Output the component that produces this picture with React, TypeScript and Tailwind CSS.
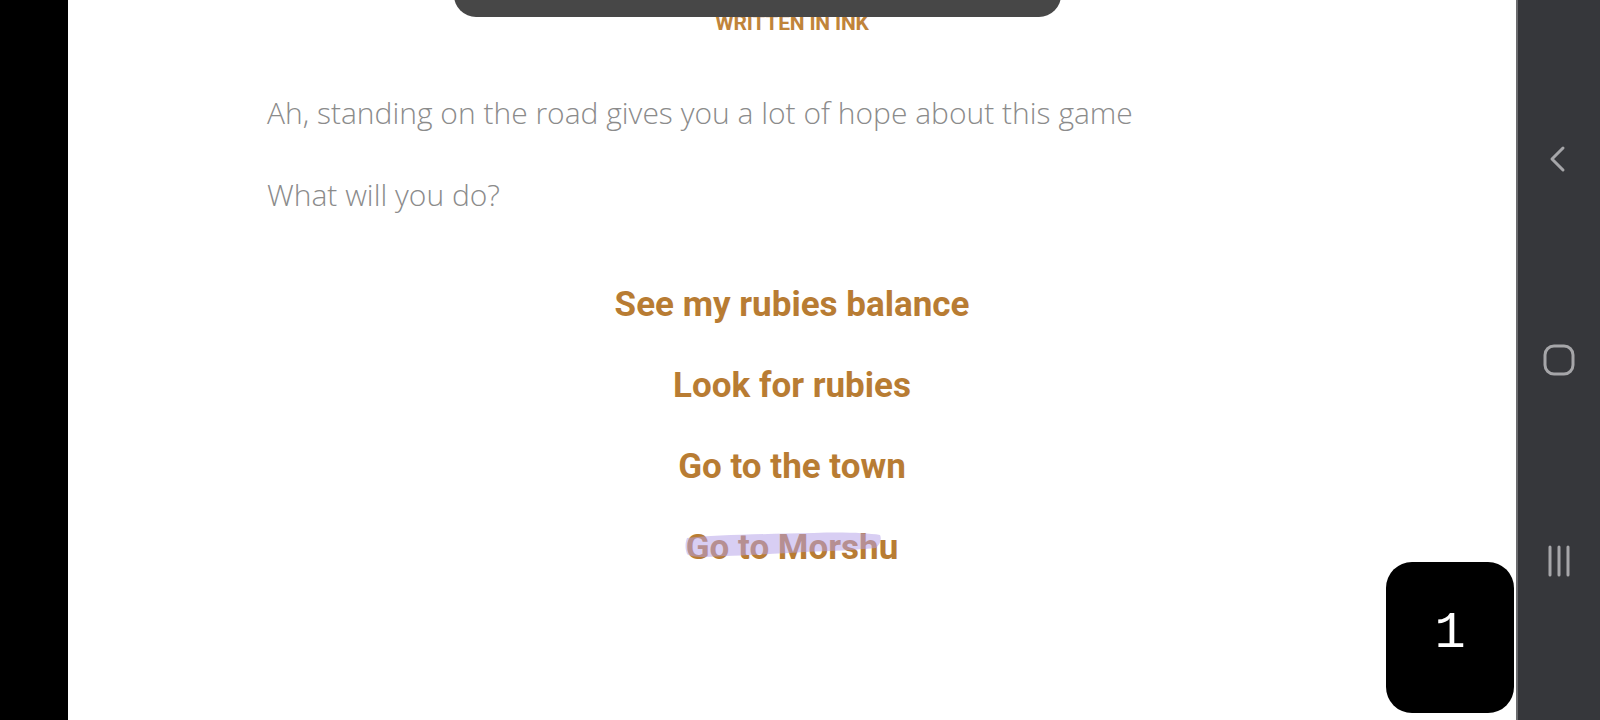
import React from "react";

const choices = ["See my rubies balance", "Look for rubies", "Go to the town", "Go to Morshu"];

export default function App() {
  return (
    <div className="flex h-[720px] w-[1600px] overflow-hidden bg-white">
      <div className="w-[68px] shrink-0 bg-black" />
      <main className="relative flex flex-1 flex-col items-center">
        {/* toast pill overlay at top */}
        <div className="absolute left-[386px] top-[-30px] h-[47px] w-[607px] rounded-[22px] bg-[#474747]">
          <div className="absolute left-[34px] top-[22px] h-[8px] w-[20px] rounded-b-full bg-[#555555]" />
        </div>
        <div
          className="mt-[13px] text-[21px] font-bold uppercase leading-[20px] tracking-[-0.2px] text-[#c0843a]"
          style={{ fontFamily: "Roboto, sans-serif" }}
        >
          Written in Ink
        </div>
        <div
          className="mt-[60px] flex w-[1050px] flex-col gap-[42px] text-[30px] font-light leading-[40px] text-[#8b8b8b]"
          style={{ fontFamily: '"Open Sans", sans-serif' }}
        >
          <p>Ah, standing on the road gives you a lot of hope about this game</p>
          <p>What will you do?</p>
        </div>
        <div
          className="mt-[70px] flex flex-col items-center gap-[41px] text-[35px] font-bold leading-[40px] text-[#b87c33]"
          style={{ fontFamily: "Roboto, sans-serif" }}
        >
          {choices.map((c, i) => (
            <div key={c} className="relative">
              <span>{c}</span>
              {i === 3 && (
                <svg
                  className="pointer-events-none absolute left-[-2px] top-[0px]"
                  width="200"
                  height="32"
                  viewBox="0 0 200 32"
                >
                  <path
                    d="M3 10 C 30 7, 80 6, 130 5 C 160 4, 182 5, 196 7 C 198 11, 196 16, 192 20 C 170 22, 150 23, 120 24 C 90 26, 50 28, 20 29 C 10 29, 5 28, 3 26 C 1 21, 1 15, 3 10 Z"
                    fill="#b4a2e8"
                    opacity="0.52"
                  />
                </svg>
              )}
            </div>
          ))}
        </div>
        {/* counter badge */}
        <div className="absolute bottom-[7px] right-[2px] flex h-[151px] w-[128px] items-center justify-center rounded-[26px] bg-black pb-[8px]">
          <span
            className="text-[52px] leading-none text-white"
            style={{ fontFamily: '"Liberation Mono", monospace', fontWeight: 400 }}
          >
            1
          </span>
        </div>
      </main>
      <div className="w-[2px] shrink-0 bg-[#6b6b6e]" />
      <nav className="flex w-[82px] shrink-0 flex-col items-center justify-between bg-[#36373b] pb-[143px] pt-[143px]">
        <svg width="30" height="32" viewBox="0 0 30 32" fill="none">
          <path d="M19 5 L8 16 L19 27" stroke="#a6a6a9" strokeWidth="3" strokeLinecap="round" strokeLinejoin="round" />
        </svg>
        <svg width="32" height="32" viewBox="0 0 32 32" fill="none">
          <rect x="2" y="2" width="28" height="28" rx="9" stroke="#a6a6a9" strokeWidth="3" />
        </svg>
        <svg width="30" height="32" viewBox="0 0 30 32" fill="none">
          <path d="M6 2 V30 M15 2 V30 M24 2 V30" stroke="#a6a6a9" strokeWidth="3" strokeLinecap="round" />
        </svg>
      </nav>
    </div>
  );
}
